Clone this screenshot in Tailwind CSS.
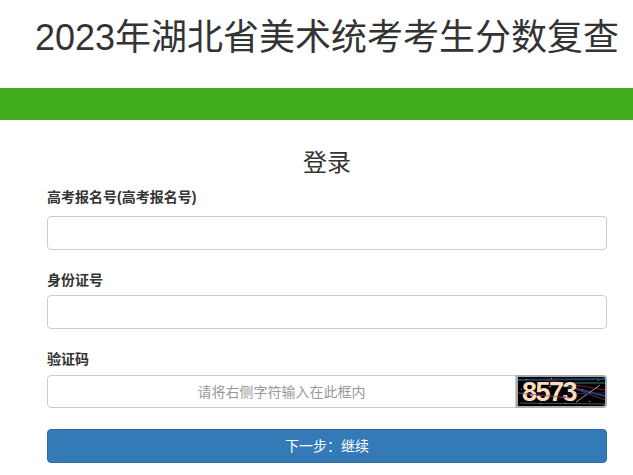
<!DOCTYPE html>
<html lang="zh-CN">
    <head>
        <meta charset="utf-8">
        <title>2023年湖北省美术统考考生分数复查</title>
        <script src="https://cdn.jsdelivr.net/npm/@tailwindcss/browser@4"></script>
    </head>
    <body class="bg-white text-[#333] font-['Liberation_Sans','Noto_Sans_CJK_SC',sans-serif] overflow-hidden">
        <header class="h-[88px] pl-[35px] pt-[18px]">
            <h1 class="text-[36px] leading-[40px] font-normal whitespace-nowrap">2023年湖北省美术统考考生分数复查</h1>
        </header>
        <div class="h-8 bg-[#42ad1c]"></div>

        <form class="px-[47px] pr-[26px]">
            <h2 class="mt-[27px] text-center text-2xl leading-[32px] font-normal">登录</h2>

            <label class="block mt-[8px] text-sm leading-5 font-bold">高考报名号(高考报名号)</label>
            <input type="text" class="block mt-[9px] w-full h-[34px] bg-white border border-[#ccc] rounded">

            <label class="block mt-[20px] text-sm leading-5 font-bold">身份证号</label>
            <input type="text" class="block mt-[5px] w-full h-[34px] bg-white border border-[#ccc] rounded">

            <label class="block mt-[20px] text-sm leading-5 font-bold">验证码</label>
            <div class="mt-[6px] flex h-[33px]">
                <input type="text" placeholder="请将右侧字符输入在此框内" class="flex-1 min-w-0 h-full px-3 text-center text-sm bg-white border border-[#ccc] rounded-l placeholder:text-[#999]">
                <div class="relative w-[91px] h-full bg-black border-2 border-[#aaa] rounded-r overflow-hidden">
                    <svg class="absolute inset-0" width="87" height="29" viewBox="0 0 87 29" fill="none">
                        <path d="M0 3L87 2" stroke="#1d3f6e" stroke-width="2"/>
                        <path d="M28 3L87 13" stroke="#7a1f3d"/>
                        <path d="M36 6L87 19" stroke="#21408a" stroke-width="2"/>
                        <path d="M58 25L82 8" stroke="#9a9a9a"/>
                        <path d="M52 10L87 23" stroke="#6b2a2a"/>
                        <path d="M0 16L52 21" stroke="#7a2a66"/>
                        <path d="M2 26L87 27" stroke="#4a5a4a"/>
                        <path d="M56 6L87 6" stroke="#3d7a6b"/>
                        <path d="M50 17L87 16" stroke="#2a2a6e"/>
                        <g fill="#8fa3a3">
                            <rect x="8" y="2" width="1" height="1"/>
                            <rect x="22" y="26" width="1" height="1"/>
                            <rect x="33" y="1" width="1" height="1"/>
                            <rect x="47" y="26" width="1" height="1"/>
                            <rect x="71" y="24" width="1" height="1"/>
                            <rect x="80" y="3" width="1" height="1"/>
                            <rect x="3" y="12" width="1" height="1"/>
                            <rect x="64" y="12" width="1" height="1"/>
                        </g>
                    </svg>
                    <span class="absolute left-[4px] top-[3px] text-[27px] leading-[24px] font-bold tracking-[-1.5px] text-[#f8dfb8] font-['Liberation_Sans',sans-serif]">8573</span>
                    <svg class="absolute inset-0" width="87" height="29" viewBox="0 0 87 29" fill="none">
                        <path d="M0 16L52 21" stroke="#7a2a66" stroke-opacity="0.6"/>
                        <g fill="#f03cc8">
                            <rect x="12" y="17" width="2" height="2"/>
                            <rect x="31" y="9" width="2" height="1"/>
                            <rect x="46" y="19" width="2" height="2"/>
                        </g>
                    </svg>
                </div>
            </div>

            <button type="button" class="block mt-[21px] w-full h-[34px] text-sm text-white bg-[#337ab7] border border-[#2e6da4] rounded">下一步：继续</button>
        </form>
    </body>
</html>
